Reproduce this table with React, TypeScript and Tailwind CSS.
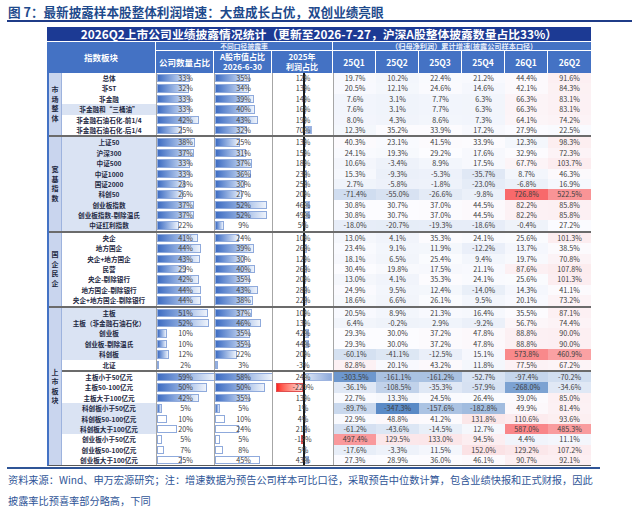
type Row = {
  name: string;
  a: number;
  b: number;
  c: number;
  q: number[];
  hl?: boolean;
  pale?: boolean;
  cw?: number;
};

type Section = {
  label: string;
  groups: Row[][];
};

const r = (
  name: string,
  a: number,
  b: number,
  c: number,
  q: number[],
  opts: { hl?: boolean; pale?: boolean; cw?: number } = {}
): Row => ({ name, a, b, c, q, ...opts });

const sections: Section[] = [
  {
    label: "市场整体",
    groups: [
      [
        r("总体", 33, 35, 12, [19.7, 10.2, 22.4, 21.2, 44.4, 91.6]),
        r("非ST", 32, 34, 13, [20.5, 12.1, 24.6, 14.6, 42.1, 84.3]),
        r("非金融", 33, 39, 14, [7.6, 3.1, 7.7, 6.3, 66.3, 83.1]),
        r("非金融和“三桶油”", 33, 40, 16, [7.6, 3.1, 7.7, 6.3, 66.3, 83.1], { hl: true }),
        r("非金融石油石化-前1/4", 42, 43, 19, [8.0, 4.3, 8.6, 7.3, 64.1, 74.2]),
        r("非金融石油石化-后1/4", 25, 32, 70, [12.3, 35.2, 33.9, 17.2, 27.9, 22.5]),
      ],
    ],
  },
  {
    label: "宽基指数",
    groups: [
      [
        r("上证50", 38, 25, 13, [40.3, 23.1, 41.5, 33.9, 12.3, 98.3], { hl: true }),
        r("沪深300", 37, 31, 15, [24.1, 19.3, 29.2, 17.6, 32.9, 72.3], { hl: true }),
        r("中证500", 33, 37, 18, [10.6, -3.4, 8.9, 17.5, 67.7, 103.7], { hl: true }),
        r("中证1000", 33, 36, 23, [15.3, -9.3, -5.3, -35.7, 8.7, 46.3], { hl: true }),
        r("国证2000", 28, 30, 25, [2.7, -5.8, -1.8, -23.0, -6.8, 16.9], { hl: true }),
        r("科创50", 26, 27, 20, [-71.4, -55.0, -26.6, -9.8, 726.8, 522.5], { hl: true }),
        r("创业板指数", 37, 52, 46, [30.8, 30.7, 37.0, 44.5, 82.2, 85.8], { hl: true }),
        r("创业板指数-剔除温氏", 37, 52, 49, [30.8, 30.7, 37.0, 44.5, 82.2, 85.8], { hl: true }),
        r("中证红利指数", 22, 9, 5, [-18.0, -20.7, -19.3, -18.6, -0.4, 27.2], { hl: true }),
      ],
    ],
  },
  {
    label: "国企民企",
    groups: [
      [
        r("央企", 41, 24, 10, [13.0, 4.1, 35.3, 24.1, 25.6, 101.3]),
        r("地方国企", 44, 39, 26, [23.4, 9.1, 11.9, -12.2, 13.7, 38.5]),
        r("央企+地方国企", 43, 30, 12, [18.1, 6.5, 25.4, 9.4, 19.7, 70.8]),
        r("民营", 29, 40, 26, [30.4, 19.8, 17.5, 21.1, 87.6, 107.8]),
        r("央企-剔除银行", 42, 35, 20, [13.0, 4.1, 35.3, 24.1, 25.6, 101.3]),
        r("地方国企-剔除银行", 44, 43, 28, [24.9, 9.5, 12.4, -14.0, 14.3, 41.1]),
        r("央企+地方国企-剔除银行", 44, 38, 22, [18.6, 6.6, 26.1, 9.5, 20.1, 73.2]),
      ],
    ],
  },
  {
    label: "上市板块",
    groups: [
      [
        r("主板", 51, 37, 10, [20.5, 8.9, 21.3, 16.4, 35.5, 87.1], { hl: true }),
        r("主板（非金融石油石化）", 52, 46, 13, [6.4, -0.2, 2.9, -9.2, 56.7, 74.4], { hl: true }),
        r("创业板", 10, 35, 42, [29.3, 30.0, 37.2, 47.8, 88.8, 90.0], { hl: true }),
        r("创业板-剔除温氏", 10, 35, 44, [29.3, 30.0, 37.2, 47.8, 88.8, 90.0], { hl: true }),
        r("科创板", 12, 22, 20, [-60.1, -41.1, -12.5, 15.1, 573.8, 460.9], { hl: true }),
        r("北证", 2, 3, -3, [82.8, 20.1, 43.2, 11.8, 77.5, 67.2]),
      ],
      [
        r("主板小于50亿元", 59, 58, 24, [-303.5, -161.1, -161.2, -52.7, -97.4, -70.2], { cw: 28 }),
        r("主板50-100亿元", 50, 50, -229, [-36.1, -108.5, -35.3, -57.9, -268.0, -34.6]),
        r("主板大于100亿元", 42, 35, 13, [22.7, 13.3, 24.5, 26.4, 39.0, 85.0]),
        r("科创板小于50亿元", 5, 5, 1, [-89.7, -347.3, -157.6, -182.8, 49.9, 81.4], { hl: true }),
        r("科创板50-100亿元", 10, 10, 4, [22.9, 48.8, 41.2, 131.8, 110.6, 93.6], { hl: true, pale: true }),
        r("科创板大于100亿元", 20, 24, 21, [-61.2, -43.6, -14.5, 12.7, 587.0, 485.3], { hl: true, pale: true }),
        r("创业板小于50亿元", 5, 5, -15, [497.4, 129.5, 133.0, 94.5, 4.4, 11.1], { pale: true }),
        r("创业板50-100亿元", 7, 8, 5, [-17.6, -3.3, 11.5, 152.0, 129.2, 107.2], { pale: true }),
        r("创业板大于100亿元", 25, 45, 43, [27.3, 28.9, 36.0, 46.1, 90.7, 92.1], { pale: true }),
      ],
    ],
  },
];

// excel-style 3 colour scale, one scale for the whole block
function heat(v: number) {
  const mid = 30;
  const min = -347.3;
  const max = 726.8;
  const base = [252, 252, 255];
  let t: number;
  let to: number[];
  if (v >= mid) {
    t = (v - mid) / (max - mid);
    to = [248, 105, 107];
  } else {
    t = (mid - v) / (mid - min);
    to = [90, 138, 198];
  }
  const c = base.map((x, i) => Math.round(x + (to[i] - x) * t));
  return `rgb(${c[0]},${c[1]},${c[2]})`;
}

const ROW = "grid grid-cols-[94px_58px_58px_61px_repeat(6,43px)] h-[10.4px]";

function BarCell({ v, pale }: { v: number; pale?: boolean }) {
  return (
    <div className="relative border-l border-[#a6a6a6] bg-white">
      <div
        className={`absolute left-0 top-[1px] bottom-[1px] border border-[#8faadc] ${
          pale ? "bg-white" : "bg-linear-to-r from-[#3f6dc2] to-[#eef3fb]"
        }`}
        style={{ width: Math.max(2, v) }}
      />
      <div className="relative text-center text-[7.2px] leading-[10.4px] text-[#404040]">
        {v}%
      </div>
    </div>
  );
}

function ProfitCell({ v, cw }: { v: number; cw?: number }) {
  const w = cw ?? Math.abs(v) * 0.12;
  return (
    <div className="relative border-l border-[#a6a6a6] bg-white">
      {v >= 0 ? (
        <div
          className="absolute left-[31px] top-[1px] bottom-[1px] border border-[#9db4e0] bg-linear-to-r from-[#dfe7f6] to-[#8eaadb]"
          style={{ width: w }}
        />
      ) : (
        <div
          className="absolute top-[1px] bottom-[1px] border border-[#e05050] bg-linear-to-r from-[#ff1f1f] to-[#ffd6d6]"
          style={{ width: w, left: 30 - w }}
        />
      )}
      <div className="absolute left-[30px] top-0 bottom-0 w-[1.5px] bg-[#1a1a1a]" />
      <div className="relative text-center text-[7.2px] leading-[10.4px] text-[#404040]">
        {v}%
      </div>
    </div>
  );
}

function DataRow({ row }: { row: Row }) {
  return (
    <div className={ROW}>
      <div
        className={`${
          row.hl ? "bg-[#dae3f3]" : "bg-white"
        } whitespace-nowrap text-center text-[6.6px] font-bold leading-[10.4px] text-[#1f2a44]`}
      >
        {row.name}
      </div>
      <BarCell v={row.a} pale={row.pale} />
      <BarCell v={row.b} pale={row.pale} />
      <ProfitCell v={row.c} cw={row.cw} />
      {row.q.map((v, i) => (
        <div
          key={i}
          className={`text-center text-[7.2px] leading-[10.4px] text-[#404040] ${
            i === 0 ? "border-l border-[#a6a6a6]" : ""
          }`}
          style={{ background: heat(v) }}
        >
          {v.toFixed(1)}%
        </div>
      ))}
    </div>
  );
}

export default function App() {
  return (
    <div className="w-[640px] h-[513px] overflow-hidden bg-white font-['Noto_Sans_CJK_SC',sans-serif]">
      <div className="px-2 pt-[4px] h-[20px] text-[12.6px] font-bold leading-[16px] text-[#1e4a8c] whitespace-nowrap">
        图 7：最新披露样本股整体利润增速：大盘成长占优，双创业绩亮眼
      </div>
      <div className="ml-[7px] w-[625px] h-[2px] bg-[#1f3c88]" />

      <div className="pl-[47px] pt-[5px]">
        <div className="w-[544px]">
          <div className="flex h-[14px] items-start justify-center bg-[#1c3a94] text-[11.8px] font-bold leading-[13px] text-white whitespace-nowrap">
            2026Q2上市公司业绩披露情况统计（更新至2026-7-27，沪深A股整体披露数量占比33%）
          </div>
          <div className="grid grid-cols-[109px_58px_58px_61px_repeat(6,43px)] grid-rows-[9px_22px] border-t border-white bg-[#4472c4] font-bold text-white">
            <div className="row-span-2 flex items-center justify-center border-r border-white text-[8.5px]">
              指数板块
            </div>
            <div className="col-span-3 flex items-end justify-center border-r border-b border-white text-[6.8px] leading-[7px] text-[#e6ecf8]">
              不同口径披露率
            </div>
            <div className="col-span-6 flex items-end justify-center border-b border-white text-[7.2px] leading-[7px] text-[#e6ecf8] whitespace-nowrap">
              （归母净利润）累计增速(披露公司样本口径)
            </div>
            <div className="flex items-center justify-center border-r border-white text-[8.5px]">
              公司数量占比
            </div>
            <div className="flex flex-col items-center justify-center border-r border-white text-[8px] leading-[10.5px]">
              <span>A股市值占比</span>
              <span>2026-6-30</span>
            </div>
            <div className="flex flex-col items-center justify-center border-r border-white text-[8px] leading-[10.5px]">
              <span>2025年</span>
              <span>利润占比</span>
            </div>
            {["25Q1", "25Q2", "25Q3", "25Q4", "26Q1", "26Q2"].map((h, i) => (
              <div
                key={h}
                className={`flex items-center justify-center text-[8.5px] ${
                  i < 5 ? "border-r border-white" : ""
                }`}
              >
                {h}
              </div>
            ))}
          </div>

          <div className="border-l-2 border-[#4472c4] border-b border-b-[#595959]">
            {sections.map((s, si) => (
              <div
                key={s.label}
                className={`flex ${si > 0 ? "border-t-2 border-[#6b6b6b]" : ""}`}
              >
                <div className="w-[13px] shrink-0 flex flex-col items-center justify-center bg-[#c9d5ee] border-r border-[#9db3de] text-[7px] font-bold leading-[9.5px] text-[#1f2a44]">
                  {s.label.split("").map((ch, i) => (
                    <span key={i}>{ch}</span>
                  ))}
                </div>
                <div className="flex flex-col">
                  {s.groups.map((g, gi) => (
                    <div
                      key={gi}
                      className={gi > 0 ? "border-t-2 border-[#6b6b6b]" : ""}
                    >
                      {g.map((row) => (
                        <DataRow key={row.name} row={row} />
                      ))}
                    </div>
                  ))}
                </div>
              </div>
            ))}
          </div>
        </div>
      </div>

      <div className="ml-[7px] mt-[1px] w-[593px] h-[2px] bg-[#2f5597]" />
      <div className="px-2 text-[10.2px] leading-[21px] text-[#2f5597] whitespace-nowrap">
        <div>
          资料来源：Wind、申万宏源研究；注：增速数据为预告公司样本可比口径，采取预告中位数计算，包含业绩快报和正式财报，因此
        </div>
        <div>披露率比预喜率部分略高，下同</div>
      </div>
    </div>
  );
}
